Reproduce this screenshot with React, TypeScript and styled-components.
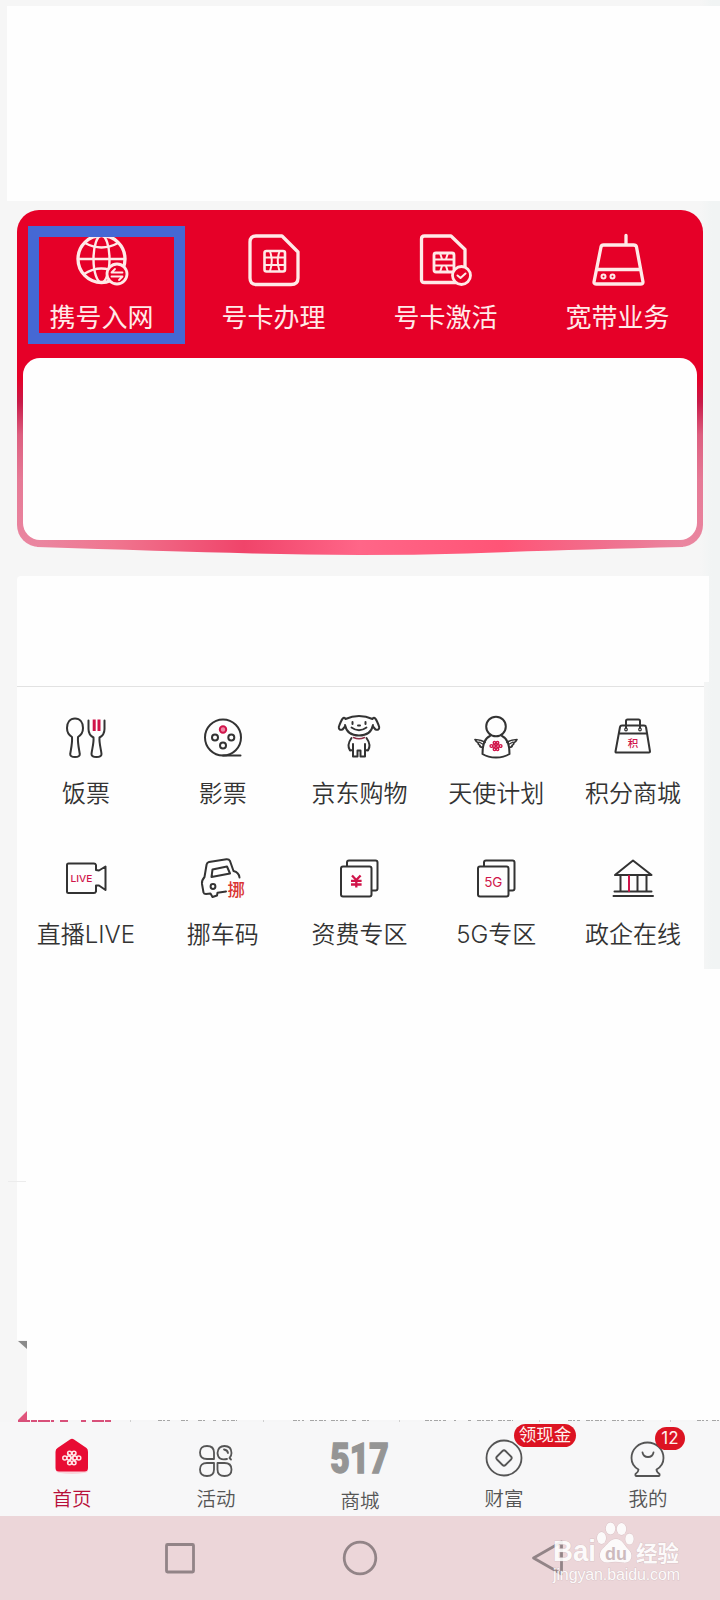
import React from "react";
import styled, { createGlobalStyle } from "styled-components";

const GlobalStyle = createGlobalStyle`
  *, *::before, *::after { box-sizing: border-box; }
  body {
    margin: 0;
    background: #f6f6f6;
    font-family: Inter, "Noto Sans CJK SC", sans-serif;
  }
  svg { display: block; }
`;

const Page = styled.main`
  position: relative;
  width: 720px;
  height: 1600px;
  overflow: hidden;
  display: flex;
  flex-direction: column;
  background: linear-gradient(to right, #f6f6f6 0 700px, #f1f4f4 712px);
`;

const HeaderBlank = styled.div`
  height: 195px;
  margin: 6px 0 9px 7px;
  flex: none;
  background: #fefefe;
`;

const ServiceCard = styled.section`
  position: relative;
  flex: none;
  width: 686px;
  height: 337px;
  margin-left: 17px;
  border-radius: 22px;
  background: linear-gradient(
    to bottom,
    #e60028 0 168px,
    #c81a48 192px,
    #dd5f80 225px,
    #e67a96 270px,
    #ea86a0 100%
  );
`;

const ServiceRow = styled.div`
  display: flex;
  width: 688px;
  height: 148px;
  margin-left: -1.5px;
`;

const ServiceItem = styled.div`
  position: relative;
  width: 172px;
  display: flex;
  flex-direction: column;
  align-items: center;
  padding-top: 22px;
  gap: 12px;
`;

const ServiceLabel = styled.span`
  font-size: 26px;
  line-height: 36px;
  color: #ffeae8;
  white-space: nowrap;
`;

const Highlight = styled.div`
  position: absolute;
  left: 12.5px;
  top: 16px;
  width: 157px;
  height: 118px;
  border: 11px solid #4568d4;
`;

const ServicePanel = styled.div`
  position: relative;
  width: 674px;
  height: 182px;
  margin-left: 6px;
  border-radius: 17px;
  background: #fefefe;
`;

const CardLip = styled.svg`
  position: absolute;
  left: 0;
  top: 324px;
`;

const NoticeBlank = styled.div`
  flex: none;
  width: 692px;
  height: 106px;
  margin: 29px 0 0 17px;
  border-radius: 4px 0 0 0;
  background: #fefefe;
`;

const GridSection = styled.section`
  flex: none;
  display: grid;
  grid-template-columns: repeat(5, 136.8px);
  grid-auto-rows: 141px;
  align-content: start;
  width: 687px;
  height: 287px;
  margin-left: 17px;
  padding: 30.5px 0 0 0.5px;
  background: linear-gradient(#fefefe 0 4px, #e2e2e2 4px 5px, #fefefe 5px);
`;

const GridItem = styled.div`
  display: flex;
  flex-direction: column;
  align-items: center;
  gap: 17px;
`;

const GridLabel = styled.span`
  font-size: 24px;
  font-weight: 350;
  line-height: 32px;
  color: #333;
  white-space: nowrap;
`;

const ContentBlank = styled.div`
  flex: none;
  height: 371px;
  border-left: 17px solid #f6f6f6;
  background: #fefefe;
`;

const Seam = styled.div`
  width: 18px;
  height: 1px;
  margin: 212px 0 0 -9px;
  background: #ececec;
`;

const ContentTail = styled.div`
  flex: none;
  display: flex;
  height: 80px;
`;

const TailGutter = styled.div`
  width: 27px;
`;

const TailBlank = styled.div`
  flex: 1;
  background: #fefefe;
`;

const Fragments = styled.svg`
  flex: none;
`;

const TabBar = styled.nav`
  flex: none;
  display: flex;
  height: 94px;
  background: #f7f7f8;
`;

const Tab = styled.div`
  position: relative;
  width: 144px;
  display: flex;
  flex-direction: column;
  align-items: center;
  padding-top: 13px;
`;

const TabLabel = styled.span<{ $active?: boolean; $drop?: number }>`
  margin-top: ${(p) => 8 + (p.$drop ?? 0)}px;
  font-size: 19.5px;
  font-weight: 350;
  line-height: 24px;
  color: ${(p) => (p.$active ? "#b8103a" : "#555")};
`;

const Brand517 = styled.div`
  height: 44px;
  font: 900 42px/48px Roboto, sans-serif;
  color: #959595;
  -webkit-text-stroke: 1.4px #959595;
  transform: scaleX(0.8);
`;

const Badge = styled.span<{ $left: number; $top: number; $width: number; $size: number }>`
  position: absolute;
  left: ${(p) => p.$left}px;
  top: ${(p) => p.$top}px;
  width: ${(p) => p.$width}px;
  height: 23px;
  border-radius: 12px;
  background: #dc1322;
  color: #fff0ee;
  font-size: ${(p) => p.$size}px;
  font-weight: 400;
  line-height: 22px;
  text-align: center;
  white-space: nowrap;
`;

const SystemBar = styled.footer`
  flex: none;
  display: flex;
  justify-content: center;
  gap: 140px;
  height: 84px;
  padding-top: 22px;
  background: #ecd6d9;
`;

const Watermark = styled.svg`
  position: absolute;
  left: 545px;
  top: 1518px;
`;

/* ---------- service icons ---------- */

const ServiceIcon = ({ children }: { children: React.ReactNode }) => (
  <svg width="56" height="56" viewBox="0 0 56 56" fill="none" stroke="#ffeae8" strokeWidth="3.3" strokeLinejoin="round" strokeLinecap="round">
    {children}
  </svg>
);

const GlobeSwap = () => (
  <ServiceIcon>
    <circle cx="27.500" cy="27" r="23.5" />
    <ellipse cx="27.500" cy="27" rx="8" ry="23.5" strokeWidth="2.4" />
    <path d="M4 27H51M11 11Q27.500 20 44 11M10 42Q27.500 31 44 42" strokeWidth="2.4" />
    <circle cx="43" cy="42" r="10" fill="#e60028" strokeWidth="2.8" />
    <path d="M37.500 40.500H48.500M41 37L37.500 40.500M37.500 44.500H48.500L45 48" strokeWidth="1.8" />
  </ServiceIcon>
);

const SimCard = () => (
  <ServiceIcon>
    <path d="M10 4H36L52 20V46Q52 52.500 45 52.500H10Q4 52.500 4 46V10Q4 4 10 4Z" />
    <rect x="18.500" y="19" width="20.500" height="20.500" rx="2" strokeWidth="2.6" />
    <path d="M19 25.500H39M19 33H39M24 19.500Q27.500 29 24 39M33.500 19.500Q30 29 33.500 39" strokeWidth="2" />
  </ServiceIcon>
);

const SimCheck = () => (
  <ServiceIcon>
    <path d="M6.500 4H33L47 17.500V48Q47 50.500 44 50.500H6.500Q3.500 50.500 3.500 48V7Q3.500 4 6.500 4Z" />
    <rect x="16" y="21" width="20" height="19" rx="2" strokeWidth="2.8" />
    <path d="M16 27.500H36M16 33.500H36M22 21L24 27M30 21L28 27M22 40L24 34M30 40L28 34" strokeWidth="2" />
    <circle cx="43.500" cy="43.500" r="9" fill="#e60028" strokeWidth="2.8" />
    <path d="M39.500 43.500L42.500 46L47.500 41.500" strokeWidth="2" />
  </ServiceIcon>
);

const Router = () => (
  <ServiceIcon>
    <path d="M13.500 13H43.500Q46 13 46.500 15L53 50Q53 52 50.500 52H6.500Q3.800 52 4 50L11 15Q11.500 13 13.500 13ZM6.500 37.500H50.500M36 3.500V12" />
    <circle cx="13.500" cy="44.500" r="2" strokeWidth="2" />
    <circle cx="22.500" cy="44.500" r="2" strokeWidth="2" />
  </ServiceIcon>
);

/* ---------- grid icons ---------- */

const RED = "#d0144a";

const GridIcon = ({ children }: { children: React.ReactNode }) => (
  <svg width="48" height="48" viewBox="0 0 48 48" fill="none" stroke="#333" strokeWidth="2" strokeLinejoin="round" strokeLinecap="round" overflow="visible">
    {children}
  </svg>
);

const Cutlery = () => (
  <GridIcon>
    <path d="M13 5.500C8 5.500 5 9.500 5 15C5 19.500 7.500 22.500 10 24C10.500 30 9 36 8.200 41Q8 44 13 44Q18 44 17.800 41C17 36 15.500 30 16 24C18.500 22.500 21 19.500 21 15C21 9.500 18 5.500 13 5.500Z" />
    <path d="M26.500 7.500V16Q26.500 22 31.500 24.500C32 30 30 36 29.500 41Q29.500 44 34.500 44Q39.500 44 39.500 41C39 36 37 30 37.500 24.500Q42.500 22 42.500 16V7.500" />
    <path d="M32.200 6.500V18M37 6.500V18" stroke={RED} strokeWidth="3" strokeLinecap="butt" />
  </GridIcon>
);

const FilmReel = () => (
  <GridIcon>
    <circle cx="24" cy="24.500" r="18" />
    <path d="M24 42.500H41.500" />
    <circle cx="24" cy="16.500" r="3.200" stroke={RED} fill="#f08aa8" />
    <circle cx="16" cy="24.500" r="3" />
    <circle cx="32.300" cy="24.500" r="3" />
    <circle cx="24" cy="32.500" r="3" />
  </GridIcon>
);

const Puppy = () => (
  <GridIcon>
    <path d="M10.500 6Q17 3 24 3Q31 3 37.500 6M10.500 6Q8 1.500 3.800 14Q3.500 17.500 7.500 16.500L10 13.500M37.500 6Q40 1.500 44.200 14Q44.500 17.500 40.500 16.500L38 13.500M10 12Q12 22.500 24 22.500Q36 22.500 38 12" />
    <path d="M16.500 14.500Q24 20 31.500 14.500" strokeWidth="1.800" />
    <path d="M17.500 9V11M30.500 9V11" strokeWidth="2" />
    <path d="M23 12.500H25" />
    <path d="M16.500 25Q11.500 32 15 37.500L18 37M31.500 25Q36.500 32 33 37.500L30 37M18 31V43.500H22.500V37.500H25.500V43.500H30V31" />
    <path d="M18.500 24.500Q24 27 29.500 24.500" stroke="#8e3048" strokeWidth="1.500" />
  </GridIcon>
);

const Knot = ({ size }: { size: number }) => (
  <g strokeWidth={size} fill="none">
    <path d="M-3.500 -4L3.500 4M3.500 -4L-3.500 4" />
    <circle cx="-2.200" cy="-4.800" r="2" />
    <circle cx="2.200" cy="-4.800" r="2" />
    <circle cx="-2.200" cy="4.800" r="2" />
    <circle cx="2.200" cy="4.800" r="2" />
    <circle cx="-3" cy="0" r="2" />
    <circle cx="3" cy="0" r="2" />
    <circle cx="-7" cy="0" r="2" />
    <circle cx="7" cy="0" r="2" />
  </g>
);

const Angel = () => (
  <GridIcon>
    <circle cx="24" cy="13.500" r="9.800" />
    <path d="M18 23C12 25.500 10.500 33 10.500 41Q16 44.500 24 44.500Q32 44.500 37.500 41C37.500 33 36 25.500 30 23" />
    <path d="M13 29.500Q10 27 3 26.500Q4 29 6.500 30Q5.500 31 8 32.500Q7 34 11 34.500M35 29.500Q38 27 45 26.500Q44 29 41.500 30Q42.500 31 40 32.500Q41 34 37 34.500" strokeWidth="1.700" />
    <path d="M7 29L11.500 31.500M41 29L36.500 31.500" strokeWidth="1.200" />
    <g transform="translate(24 33) scale(.66)" stroke={RED}>
      <Knot size={2.1} />
    </g>
  </GridIcon>
);

const PointsBag = () => (
  <GridIcon>
    <path d="M13 12.500H35Q36.800 12.500 37 14L41 38.500Q41 39.500 40 39.500H7.500Q6.300 39.500 6.500 38.500L11 14Q11.300 12.500 13 12.500ZM10 20.500H38" />
    <path d="M17 15.500V8Q17 6.500 18.500 6.500H29.500Q31 6.500 31 8V15.500" />
    <circle cx="17" cy="16.500" r="1.300" fill="#fff" strokeWidth="1.200" />
    <circle cx="31" cy="16.500" r="1.300" fill="#fff" strokeWidth="1.200" />
    <text x="24" y="34" fontSize="10.500" fontWeight="500" textAnchor="middle" fill={RED} stroke="none">积</text>
  </GridIcon>
);

const LiveCamera = () => (
  <GridIcon>
    <path d="M6.500 9.500H32Q33.500 9.500 34 11V16L37 16.500L43.500 12.500V36L37 31.500H34V37.500Q33.500 39 32 39H6.500Q5 39 5 37.500V11Q5 9.500 6.500 9.500Z" />
    <text x="19.500" y="27.500" fontSize="9.500" fontWeight="500" textLength="22" lengthAdjust="spacingAndGlyphs" textAnchor="middle" fill={RED} stroke="none">LIVE</text>
  </GridIcon>
);

const MoveCar = () => (
  <GridIcon>
    <path d="M40.500 23.500Q40 18.500 34.500 17L31 7Q30 5 27.500 5.200L10 8Q8 8.500 7.600 10.500L5.500 23Q2.500 26.500 3 30L4.500 38.500Q5 40 7 40L11.500 39.500L13.500 43L18 41.500L18.500 38.800L27 37.500" />
    <path d="M13.500 15.500L28 12.500L31 19.500L12.500 23Z" />
    <circle cx="14" cy="32.500" r="2.400" />
    <text x="37.200" y="41.500" fontSize="17.500" fontWeight="500" textAnchor="middle" fill="#d93434" stroke="none">挪</text>
  </GridIcon>
);

const StackCard = ({ children }: { children: React.ReactNode }) => (
  <GridIcon>
    <path d="M12 12V8.500Q12 6.500 14 6.500H40.500Q42.500 6.500 42.500 8.500V34.500Q42.500 36.500 40.500 36.500H37.500" />
    <rect x="6" y="12.500" width="30.500" height="30" rx="2" />
    {children}
  </GridIcon>
);

const TariffCard = () => (
  <StackCard>
    <path d="M17 21.500L21.300 26L25.600 21.500M16 26.800H26.600M16 30.500H26.600M21.300 26V33.500" stroke={RED} strokeWidth="2.300" strokeLinecap="butt" />
  </StackCard>
);

const FiveGCard = () => (
  <StackCard>
    <text x="21.300" y="32.500" fontSize="13.500" textAnchor="middle" fill={RED} stroke="none">5G</text>
  </StackCard>
);

const Institution = () => (
  <GridIcon>
    <path d="M24 6.500L6 21H42.500ZM11.500 21.500V37.500M28.500 21.500V37.500M37.500 21.500V37.500M5.500 37.500H42.500M4.500 42H44" />
    <path d="M20 22V37" stroke={RED} />
  </GridIcon>
);

/* ---------- tab icons ---------- */

const TabIcon = ({ children }: { children: React.ReactNode }) => (
  <svg width="44" height="44" viewBox="0 0 44 44" fill="none" stroke="#555" strokeWidth="1.800" strokeLinejoin="round" strokeLinecap="round" overflow="visible">
    {children}
  </svg>
);

const HomeTab = () => (
  <TabIcon>
    <ellipse cx="22" cy="36" rx="16" ry="3" fill="#fbd3da" stroke="none" />
    <path d="M20 4.500Q22 3 24 4.500L36.500 13Q38 14 38 17V33Q38 36.500 34.500 36.500H9Q5.500 36.500 5.500 33V17Q5.500 14 7.500 13Z" fill="#e80c34" stroke="none" />
    <g transform="translate(21.800 23)" stroke="#ffe6e8">
      <Knot size={1.5} />
    </g>
  </TabIcon>
);

const CloverTab = () => (
  <TabIcon>
    <path d="M20 24V17.500Q20 11 13 11Q6 11 6 17.500Q6 24 13 24Z" />
    <path d="M20 28H13Q6 28 6 34.500Q6 41 13 41Q20 41 20 34.500Z" />
    <path d="M23.500 28H30.500Q37.500 28 37.500 34.500Q37.500 41 30.500 41Q23.500 41 23.500 34.500Z" />
    <path d="M33 24Q24 26 23.500 18Q24 11 30.500 11Q37.500 11 37.500 18Q37.500 21 35.500 23L37 24.500M30 14.500Q33.500 15 34 18" />
  </TabIcon>
);

const CoinTab = () => (
  <TabIcon>
    <circle cx="22" cy="23" r="17.500" />
    <path d="M20.500 16Q22 14.500 23.500 16L29 21.500Q30.500 23 29 24.500L23.500 30Q22 31.500 20.500 30L15 24.500Q13.500 23 15 21.500Z" />
  </TabIcon>
);

const MeTab = () => (
  <TabIcon>
    <path d="M12.500 34.500C8 32 5.500 28 5.500 23C5.500 14 13 7.500 21.500 7.500C30 7.500 37.500 14 37.500 23C37.500 28 35 32 30.500 34.500C30.500 37 32 38 33.500 39Q34 41 32.500 41H10.500Q9 41 9.500 39C11 38 12.500 37 12.500 34.500Z" />
    <path d="M16.500 17.500Q17.500 22 22 22Q26.500 22 27.500 17.500" />
  </TabIcon>
);

const services = [
  { label: "携号入网", icon: <GlobeSwap />, highlighted: true },
  { label: "号卡办理", icon: <SimCard /> },
  { label: "号卡激活", icon: <SimCheck /> },
  { label: "宽带业务", icon: <Router /> },
];

const shortcuts = [
  { label: "饭票", icon: <Cutlery /> },
  { label: "影票", icon: <FilmReel /> },
  { label: "京东购物", icon: <Puppy /> },
  { label: "天使计划", icon: <Angel /> },
  { label: "积分商城", icon: <PointsBag /> },
  { label: "直播LIVE", icon: <LiveCamera /> },
  { label: "挪车码", icon: <MoveCar /> },
  { label: "资费专区", icon: <TariffCard /> },
  { label: "5G专区", icon: <FiveGCard /> },
  { label: "政企在线", icon: <Institution /> },
];

export default function App() {
  return (
    <>
      <GlobalStyle />
      <Page>
        <HeaderBlank />
        <ServiceCard>
          <CardLip width="686" height="24" viewBox="0 0 686 24">
            <defs>
              <linearGradient id="lip" x1="0" x2="1" y1="0" y2="0">
                <stop offset="0" stopColor="#ea86a0" />
                <stop offset=".12" stopColor="#f0758f" />
                <stop offset=".32" stopColor="#f0446a" />
                <stop offset=".5" stopColor="#ff6688" />
                <stop offset=".72" stopColor="#ff5476" />
                <stop offset=".88" stopColor="#f0708e" />
                <stop offset="1" stopColor="#ea86a0" />
              </linearGradient>
            </defs>
            <path d="M20 0H666V13Q540 16 450 19.500Q343 22.500 236 19.500Q146 17 20 13Z" fill="url(#lip)" />
          </CardLip>
          <ServiceRow>
            {services.map((s) => (
              <ServiceItem key={s.label}>
                {s.icon}
                <ServiceLabel>{s.label}</ServiceLabel>
                {s.highlighted && <Highlight />}
              </ServiceItem>
            ))}
          </ServiceRow>
          <ServicePanel />
        </ServiceCard>
        <NoticeBlank />
        <GridSection>
          {shortcuts.map((s) => (
            <GridItem key={s.label}>
              {s.icon}
              <GridLabel>{s.label}</GridLabel>
            </GridItem>
          ))}
        </GridSection>
        <ContentBlank>
          <Seam />
        </ContentBlank>
        <ContentTail>
          <TailGutter>
            <svg width="27" height="80" viewBox="0 0 27 80">
              <path d="M18 1H27V9Z" fill="#8a8a8a" />
              <path d="M27 71V80H18Z" fill="#e0547c" />
            </svg>
          </TailGutter>
          <TailBlank />
        </ContentTail>
        <Fragments width="720" height="2" viewBox="0 0 720 2">
          <rect width="720" height="2" fill="#f6f6f7" />
          <path d="M18 1H54M60 1H68M81 1H86M92 1H112" stroke="#d8507a" strokeWidth="2" strokeDasharray="12 1 6 1" />
          <path d="M158 .5H170M181 .5H190M198 .5H206M213 .5H216M222 .5H237M293 .5H304M310 .5H327M331 .5H348M352 .5H356M362 .5H370M425 .5H446M454 .5H456M468 .5H471M477 .5H493M498 .5H513M568 .5H580M586 .5H606M612 .5H624M628 .5H645M697 .5H708M712 .5H720" stroke="#a6a6a6" strokeDasharray="4 1 2 2" />
          <path d="M130.500 0V2M263.500 0V2M399.500 0V2M539.500 0V2M670.500 0V2" stroke="#d0d0d0" />
        </Fragments>
        <TabBar>
          <Tab>
            <HomeTab />
            <TabLabel $active>首页</TabLabel>
          </Tab>
          <Tab>
            <CloverTab />
            <TabLabel>活动</TabLabel>
          </Tab>
          <Tab>
            <Brand517>517</Brand517>
            <TabLabel $drop={2}>商城</TabLabel>
          </Tab>
          <Tab>
            <CoinTab />
            <TabLabel>财富</TabLabel>
            <Badge $left={82} $top={2} $width={62} $size={17.5}>领现金</Badge>
          </Tab>
          <Tab>
            <MeTab />
            <TabLabel>我的</TabLabel>
            <Badge $left={79} $top={5} $width={30} $size={17}>12</Badge>
          </Tab>
        </TabBar>
        <SystemBar>
          <svg width="40" height="40" viewBox="0 0 40 40" fill="none" stroke="#928487" strokeWidth="2.800" strokeLinejoin="round">
            <rect x="6.500" y="6.500" width="27" height="27.500" rx="1" />
          </svg>
          <svg width="40" height="40" viewBox="0 0 40 40" fill="none" stroke="#928487" strokeWidth="2.800">
            <circle cx="20" cy="20" r="15.800" />
          </svg>
          <svg width="40" height="40" viewBox="0 0 40 40" fill="none" stroke="#928487" strokeWidth="2.800" strokeLinejoin="round" overflow="visible">
            <path d="M13.500 20L41.500 4V36Z" />
          </svg>
        </SystemBar>
        <Watermark width="150" height="70" viewBox="0 0 150 70">
          <g fill="#fff" stroke="#c9b5b8" strokeWidth=".6" paintOrder="stroke" opacity=".88">
            <text x="8" y="43" fontFamily="Liberation Sans" fontWeight="700" fontSize="29" textLength="43" lengthAdjust="spacingAndGlyphs">Bai</text>
            <ellipse cx="56.500" cy="20" rx="4.500" ry="6" />
            <ellipse cx="65.500" cy="10.500" rx="4.700" ry="6" />
            <ellipse cx="76.500" cy="11" rx="4.700" ry="6" />
            <ellipse cx="84.500" cy="21" rx="4.200" ry="5.500" />
            <path d="M71 21C65 21 62 27 58 30.500C52 36 55 45.500 63 44.500C68 43.500 73 43.500 78 44.500C87 46 89 36 83 31C79 27 77 21 71 21Z" />
            <text x="91" y="42.500" fontFamily="Noto Sans CJK SC" fontWeight="700" fontSize="21.500">经验</text>
            <text x="8" y="61.500" fontFamily="Liberation Sans" fontSize="16" textLength="127">jingyan.baidu.com</text>
          </g>
          <text x="71" y="41.500" fontFamily="Liberation Sans" fontWeight="700" fontSize="18" textAnchor="middle" fill="#cdbabd">du</text>
        </Watermark>
      </Page>
    </>
  );
}
